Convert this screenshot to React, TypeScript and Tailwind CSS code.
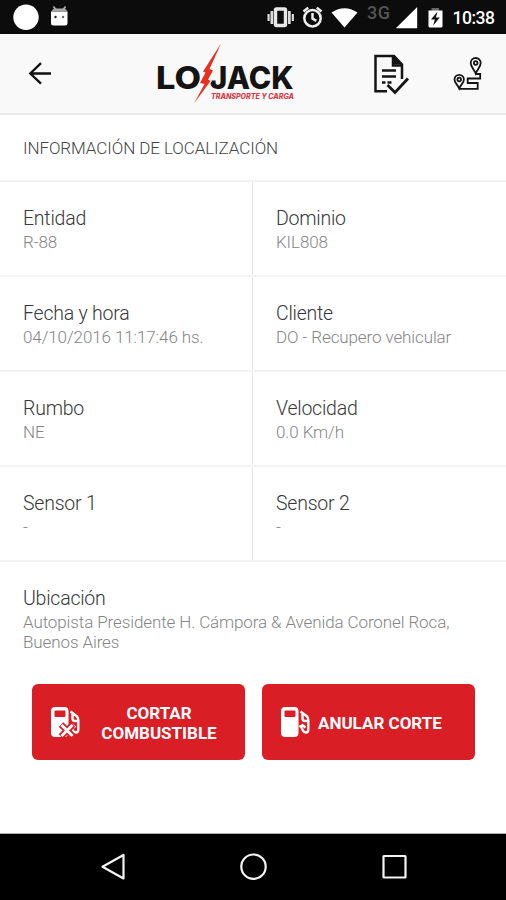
import type { ReactNode } from 'react';

interface FieldProps {
  label: string;
  value: string;
}

const rows: [FieldProps, FieldProps][] = [
  [
    { label: 'Entidad', value: 'R-88' },
    { label: 'Dominio', value: 'KIL808' },
  ],
  [
    { label: 'Fecha y hora', value: '04/10/2016 11:17:46 hs.' },
    { label: 'Cliente', value: 'DO - Recupero vehicular' },
  ],
  [
    { label: 'Rumbo', value: 'NE' },
    { label: 'Velocidad', value: '0.0 Km/h' },
  ],
  [
    { label: 'Sensor 1', value: '-' },
    { label: 'Sensor 2', value: '-' },
  ],
];

function Field({ label, value }: FieldProps) {
  return (
    <div className="pl-[23px] pt-[25px]">
      <p className="text-[19.5px] font-light leading-6 tracking-[-0.23px] text-[#383838]">{label}</p>
      <p className="mt-px text-[17px] font-light leading-5 tracking-[-0.11px] text-[#858585]">{value}</p>
    </div>
  );
}

function StatusBar() {
  return (
    <div className="h-[34px] shrink-0 bg-[#0c0c0c]">
      <svg width="506" height="34" viewBox="0 0 506 34" fill="#fff">
        <circle cx="26" cy="17.3" r="12.7" />
        {/* Debug droid */}
        <path d="M53.5 6.5 56 10M65.5 6.5 63 10" stroke="#aaa" strokeWidth="1.8" />
        <path d="M51 11.5h16.5V23a2.5 2.5 0 0 1-2.5 2.5H53.5A2.5 2.5 0 0 1 51 23z" />
        <path d="M54 8.5h11l2.5 3H51z" fill="#aaa" />
        <circle cx="55.5" cy="17" r="1.2" fill="#222" />
        <circle cx="63" cy="17" r="1.2" fill="#666" />
        {/* Vibrate */}
        <rect x="275.5" y="9" width="10" height="16.5" rx="1" fill="none" stroke="#e8e8e8" strokeWidth="3.4" />
        <path d="M270.5 11h2.7v13h-2.7zM288 11h2.7v13H288zM267.5 14h2.2v7h-2.2zM291.7 14h2.2v7h-2.2z" fill="#ddd" />
        {/* Alarm */}
        <g fill="none" stroke="#eee" strokeWidth="2.5">
          <circle cx="312.5" cy="18.2" r="8.2" />
          <path d="M303.5 11.5 308.2 7.6M321.5 11.5 316.8 7.6M312.5 13v5.5l3.8 2.4" />
        </g>
        {/* Signal */}
        <path d="M331.5 12.5Q344.5 4 357.5 12.5L344.5 27.5z" />
        <path d="M395.8 28.3h21.4V7z" />
        <text x="367" y="19" fill="#555" className="font-[Roboto] text-[18px] font-medium" textLength="23">
          3G
        </text>
        {/* Battery */}
        <path d="M431.5 8h7.5v4h-7.5z" fill="#666" />
        <path d="M428.5 10.5h14V26a1.5 1.5 0 0 1-1.5 1.5h-11a1.5 1.5 0 0 1-1.5-1.5z" />
        <path d="m437.5 11.5-6.5 8h3.8l-1.6 6 6.6-8h-3.9z" fill="#111" />
        <text x="452.5" y="24" className="font-[Roboto] text-[17.5px] font-medium" textLength="42.5">
          10:38
        </text>
      </svg>
    </div>
  );
}

function Logo() {
  return (
    <svg width="142" height="64" viewBox="155 42 142 64" role="img" aria-label="LoJack">
      <g fill="#141414" className="font-[Inter] text-[31px] font-extrabold">
        <text x="156" y="89" textLength="45" lengthAdjust="spacingAndGlyphs">
          LO
        </text>
        <text x="209.5" y="89" textLength="84" lengthAdjust="spacingAndGlyphs">
          JACK
        </text>
      </g>
      <path
        d="M221 43.5 203 71.5l2.5 1-5.5 10.5 4.500 1L194 103.500 210.500 81l-2.500-1.500 5-9-3.500-1.500z"
        fill="#e8301f"
        stroke="#f9f9f9"
        strokeWidth="2.4"
        paintOrder="stroke"
      />
      <text
        x="211"
        y="98.5"
        fill="#dc3a45"
        className="font-[Inter] text-[7px] font-extrabold italic"
        textLength="83"
        lengthAdjust="spacingAndGlyphs"
      >
        TRANSPORTE Y CARGA
      </text>
    </svg>
  );
}

function Header() {
  return (
    <header className="flex h-[81px] shrink-0 border-b-2 border-[#e8e8e8] bg-[#f9f9f9] pt-2">
      <svg width="52" height="64" viewBox="0 42 52 64" fill="none" stroke="#111" strokeWidth="2.3">
        <path d="M51 73.5H30.5M41 63.2 30.3 73.5 41 83.7" />
      </svg>
      <div className="ml-[103px]">
        <Logo />
      </div>
      {/* Report and route actions */}
      <svg width="209" height="64" viewBox="297 42 209 64" fill="none" stroke="#141414" strokeWidth="2.5">
        <path d="M387 91.2h-11.500V56H394l8 8.500V79M393 56.500v9h9" />
        <path d="M394 56.5v8h8z" fill="#141414" stroke="none" />
        <path d="M382 70.5h14M382 76.5h14M382 82.5h3.500M387.500 82.500h4" strokeWidth="2.3" />
        <path d="m387.500 85 7.500 7.500 13-14" strokeWidth="2.8" />
        <g strokeWidth="1.8">
          <path d="M475.7 73.500c-1.500-4-5-6.500-5-10.500a5 5 0 0 1 10 0c0 4-3.500 6.500-5 10.500zM459.200 88.500c-1.500-4-4.700-5.500-4.700-9a4.700 4.700 0 0 1 9.400 0c0 3.500-3.200 5-4.700 9z" />
          <circle cx="475.7" cy="63" r="1.8" />
          <circle cx="459.2" cy="79.5" r="1.8" />
          <path d="M475.7 74h4.500v4.500h-12.500v4.500h10v5.800h-18.500" />
        </g>
      </svg>
    </header>
  );
}

function Pump({ cut = false }: { cut?: boolean }) {
  return (
    <svg width="32" height="32" viewBox="0 0 32 32" fill="none" stroke="#fff" strokeWidth="2.4">
      <path
        d="M5.5 1.500h10.500a3 3 0 0 1 3 3v23a3 3 0 0 1-3 3H5.500a3 3 0 0 1-3-3v-23a3 3 0 0 1 3-3z"
        fill="#fff"
        strokeWidth="1"
      />
      <rect x="5.500" y="4.500" width="11" height="6.500" rx="1" fill="#d91e26" stroke="none" />
      <path d="m21.500 5.500 6 4.500q1.800 1.500 1.800 4v9.500q0 3-2.500 3-1.800 0-2.800-1.800l-1.500-3.200-2-2M23.500 8v4.500q0 2.500 2.500 2.500h3M22.500 18.500l4 3" />
      {cut && (
        <>
          <path d="M12 18.500 24 30.500M24 18.500 12 30.500" stroke="#d91e26" strokeWidth="6.5" />
          <path d="M12.500 19 23.500 30M23.500 19 12.500 30" strokeWidth="3" />
        </>
      )}
    </svg>
  );
}

function ActionButton({ icon, children }: { icon: ReactNode; children: ReactNode }) {
  return (
    <button className="flex h-[76px] w-[213px] items-center rounded-md bg-[#d91e26] pl-[17px] text-[17px] font-bold leading-5 text-white">
      {icon}
      {children}
    </button>
  );
}

export default function App() {
  return (
    <div className="flex h-[900px] w-[506px] flex-col overflow-hidden bg-white font-[Roboto,sans-serif]">
      <StatusBar />
      <Header />
      <h1 className="h-[67px] shrink-0 border-b-2 border-[#f3f3f3] pl-[23px] pt-[23px] text-[17px] font-light leading-5 tracking-[-0.08px] text-[#444]">
        INFORMACIÓN DE LOCALIZACIÓN
      </h1>

      <main className="flex-1">
        {rows.map(([left, right]) => (
          <div key={left.label} className="grid h-[95px] grid-cols-[253px_253px] border-b-2 border-[#f3f3f3]">
            <div className="border-r border-[#e6e6e6]">
              <Field {...left} />
            </div>
            <Field {...right} />
          </div>
        ))}
        <section className="h-[122px]">
          <Field label="Ubicación" value="Autopista Presidente H. Cámpora & Avenida Coronel Roca, Buenos Aires" />
        </section>

        <div className="flex gap-[17px] pl-8">
          <ActionButton icon={<Pump cut />}>
            <span className="ml-5 w-[116px] pt-0.5 text-center">CORTAR COMBUSTIBLE</span>
          </ActionButton>
          <ActionButton icon={<Pump />}>
            <span className="ml-[7px] pt-0.5">ANULAR CORTE</span>
          </ActionButton>
        </div>
      </main>

      <nav className="h-[67px] shrink-0 border-t border-[#aaa] bg-black">
        <svg width="506" height="66" viewBox="0 834 506 66" fill="none" stroke="#f4f4f4" strokeWidth="2.2">
          <path d="M123.500 855v23.500L102.500 866.700z" strokeLinejoin="round" />
          <circle cx="253.5" cy="866.7" r="12.2" />
          <rect x="383.5" y="856" width="22" height="21.5" rx=".5" />
        </svg>
      </nav>
    </div>
  );
}
